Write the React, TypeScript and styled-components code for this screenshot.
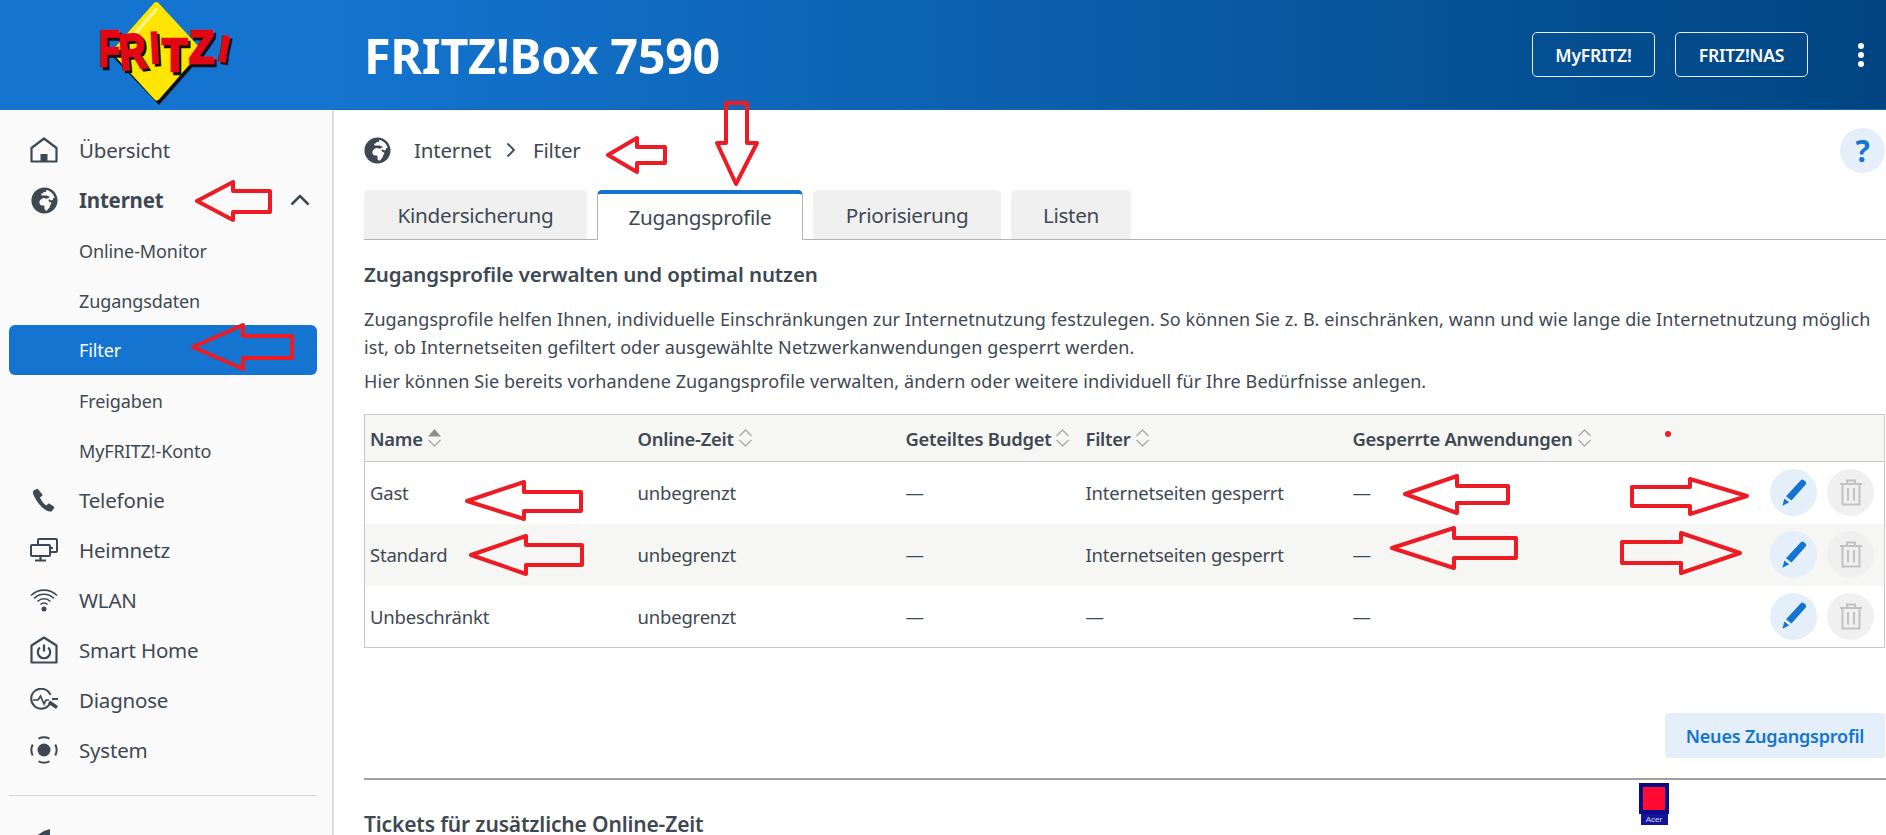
import React from "react";
import styled, { createGlobalStyle } from "styled-components";
import { FaGlobeAfrica } from "react-icons/fa";

const Global = createGlobalStyle`
  html, body {
    margin: 0;
    height: 835px;
    overflow: hidden;
    background: #fff;
  }
  body {
    font-family: "Noto Sans", "Open Sans", sans-serif;
    font-size: 18px;
    color: #3e4852;
  }
  * { box-sizing: border-box; }
`;

const Page = styled.div`
  position: relative;
  width: 1886px;
  height: 835px;
  overflow: hidden;
  display: grid;
  grid-template-columns: 334px 1fr;
  grid-template-rows: 110px 1fr;
`;

const LogoBar = styled.div`
  background: #1474d0;
  display: flex;
  align-items: flex-start;
  padding-left: 90px;
`;

const Header = styled.header`
  background: linear-gradient(90deg, #1474d0 0%, #004581 100%);
  border-bottom: 1px solid #1a62a8;
  display: flex;
  align-items: center;
  padding: 0 2px 0 30px;
`;

const Product = styled.h1`
  margin: 0 auto 0 0;
  color: #fff;
  font-size: 48.5px;
  font-weight: 700;
  letter-spacing: -0.3px;
`;

const HeaderButton = styled.button<{ $w: number }>`
  height: 45px;
  width: ${(p) => p.$w}px;
  margin-right: 20px;
  background: transparent;
  border: 1px solid #e5eef6;
  border-radius: 5px;
  color: #fff;
  font: 600 17.5px "Noto Sans", sans-serif;
  letter-spacing: -0.2px;
`;

const Dots = styled.div`
  display: flex;
  flex-direction: column;
  gap: 3px;
  margin: 0 21px 0 30px;
  span {
    width: 6px;
    height: 6px;
    border-radius: 50%;
    background: #fff;
  }
`;

const Sidebar = styled.nav`
  background: #fafafa;
  border-right: 2px solid #dcdcdc;
  padding: 15px 15px 0 9px;
  position: relative;
  &::after {
    content: "";
    position: absolute;
    left: 0;
    right: 0;
    bottom: 0;
    height: 5px;
    background: linear-gradient(180deg, rgba(250, 250, 250, 0.6), #e2e2e2);
  }
`;

const NavItem = styled.div<{ $bold?: boolean }>`
  height: 50px;
  display: flex;
  align-items: center;
  padding-left: 21px;
  border-radius: 6px;
  font-size: 20.5px;
  letter-spacing: -0.2px;
  font-weight: ${(p) => (p.$bold ? 700 : 400)};
  svg { flex: none; }
`;

const NavIcon = styled.span`
  width: 28px;
  height: 28px;
  margin-right: 21px;
  display: flex;
  align-items: center;
  justify-content: center;
  color: #3e4852;
`;

const Chevron = styled.svg`
  margin-left: auto;
  margin-right: 7px;
`;

const SubItem = styled.div<{ $active?: boolean }>`
  height: 50px;
  display: flex;
  align-items: center;
  padding-left: 70px;
  padding-top: ${(p) => (p.$active ? "0" : "1px")};
  border-radius: 6px;
  font-size: 18px;
  letter-spacing: -0.1px;
  background: ${(p) => (p.$active ? "#1474d0" : "transparent")};
  color: ${(p) => (p.$active ? "#fff" : "#3e4852")};
`;

const SideDivider = styled.div`
  border-top: 1px solid #d4d4d4;
  margin-top: 20px;
  margin-bottom: 21px;
`;

const Main = styled.main`
  padding: 0 2px 0 30px;
`;

const Crumbs = styled.div`
  height: 80px;
  display: flex;
  align-items: center;
  font-size: 20.5px;
  letter-spacing: -0.2px;
`;

const CrumbGlobe = styled(FaGlobeAfrica)`
  margin-right: 23px;
`;

const CrumbSep = styled.svg`
  margin: 0 17px 0 15px;
`;

const HelpButton = styled.div`
  margin-left: auto;
  width: 45px;
  height: 45px;
  border-radius: 50%;
  background: #e4eff9;
  color: #1474d0;
  font-size: 30px;
  font-weight: 700;
  display: flex;
  align-items: center;
  justify-content: center;
`;

const Tabs = styled.div`
  display: flex;
  gap: 10px;
  height: 50px;
  margin-right: -2px;
  border-bottom: 1px solid #b4b4b4;
`;

const Tab = styled.div<{ $w: number; $active?: boolean }>`
  width: ${(p) => p.$w}px;
  height: ${(p) => (p.$active ? "50px" : "49px")};
  display: flex;
  align-items: center;
  justify-content: center;
  font-size: 20.7px;
  letter-spacing: -0.3px;
  border-radius: 5px 5px 0 0;
  background: ${(p) => (p.$active ? "#fff" : "#f0f0f0")};
  border: ${(p) => (p.$active ? "1px solid #b4b4b4" : "none")};
  border-top: ${(p) => (p.$active ? "4px solid #1474d0" : "none")};
  border-bottom: none;
`;

const Heading = styled.h2`
  margin: 18px 0 0;
  font-size: 20.5px;
  line-height: 32px;
  font-weight: 600;
  letter-spacing: -0.1px;
`;

const Para = styled.p`
  margin: 15px 0 0;
  font-size: 18px;
  line-height: 28px;
  letter-spacing: 0.1px;
  & + & { margin-top: 6px; }
`;

const Table = styled.table`
  margin-top: 19px;
  width: 1520px;
  table-layout: fixed;
  border-collapse: collapse;
  border: 1px solid #c8c8c8;
  th {
    height: 47px;
    background: #f6f6f4;
    border-bottom: 1px solid #c8c8c8;
    text-align: left;
    padding: 0 6px;
    font-size: 18.4px;
    font-weight: 600;
    letter-spacing: -0.25px;
  }
  td {
    height: 62px;
    padding: 0 6px;
    font-size: 18.5px;
    letter-spacing: -0.2px;
  }
  th:first-child, td:first-child { padding-left: 5px; }
  tbody tr:nth-child(2) td { background: #f6f6f4; }
`;

const HeadInner = styled.span`
  display: inline-flex;
  align-items: center;
  gap: 4px;
  white-space: nowrap;
`;

const Actions = styled.div`
  display: flex;
  justify-content: flex-end;
  gap: 10px;
  padding-right: 4px;
`;

const DashCell = styled.span`
  margin-right: auto;
  align-self: center;
`;

const RoundButton = styled.div<{ $off?: boolean }>`
  width: 47px;
  height: 47px;
  border-radius: 50%;
  background: ${(p) => (p.$off ? "#f0f0f0" : "#e4eff9")};
  display: flex;
  align-items: center;
  justify-content: center;
`;

const FormActions = styled.div`
  display: flex;
  justify-content: flex-end;
  margin-top: 65px;
`;

const PrimaryButton = styled.div`
  width: 220px;
  height: 45px;
  border-radius: 4px;
  background: #e4eff9;
  color: #1474d0;
  font-size: 18px;
  font-weight: 600;
  letter-spacing: -0.2px;
  display: flex;
  align-items: center;
  justify-content: center;
`;

const Rule = styled.div`
  margin-top: 20px;
  margin-right: -2px;
  border-top: 2px solid #a0a0a0;
`;

const SubHeading = styled.h2`
  margin: 30px 0 0;
  font-size: 21px;
  font-weight: 600;
  letter-spacing: -0.15px;
`;

const Overlay = styled.svg`
  position: absolute;
  left: 0;
  top: 0;
  pointer-events: none;
`;

const Sticker = styled.div`
  position: absolute;
  left: 1639px;
  top: 783px;
  width: 30px;
  display: flex;
  flex-direction: column;
  align-items: center;
`;

const StickerBox = styled.div`
  width: 30px;
  height: 31px;
  background: #ff0a30;
  border: 4px solid #0a0a86;
`;

const StickerTag = styled.div`
  width: 27px;
  height: 11px;
  background: #14149a;
  color: #d8d8f0;
  font: 8px/11px "Liberation Sans", sans-serif;
  text-align: center;
`;

const HomeIcon = () => (
  <svg width="28" height="26" viewBox="0 0 28 26" fill="none" stroke="currentColor" strokeWidth="2.2" strokeLinejoin="round">
    <path d="M1.5 11 14 1.5 26.5 11v13.5h-25z" />
    <path d="M10.5 25v-8h7v8z" fill="currentColor" stroke="none" />
  </svg>
);

const PhoneIcon = () => (
  <svg width="24" height="24" viewBox="0 0 24 24" fill="currentColor">
    <path d="M4.6 1 1.7 2.6C.6 3.6.8 5.600 2 8c2.700 6 6.800 11 12.400 14.500 2.500 1.500 4.900 1.500 6-.1l1.700-2.300c.4-.6.3-1.300-.3-1.700l-4.200-2.700c-.6-.3-1.200-.2-1.700.3l-1.500 1.600c-2.900-1.800-5.200-4.700-6.500-8.300l1.900-1.100c.6-.4.8-1 .6-1.600L6.300 1.500C6 .9 5.200.7 4.600 1z" />
  </svg>
);

const NetworkIcon = () => (
  <svg width="28" height="24" viewBox="0 0 28 24" fill="none" stroke="currentColor" strokeWidth="2">
    <path d="M8 6V2a1 1 0 0 1 1-1h17a1 1 0 0 1 1 1v11a1 1 0 0 1-1 1h-6" />
    <rect x="1" y="7" width="19" height="11" rx="1" />
    <path d="M10.500 18v4M5 22.500h11" strokeWidth="2.200" />
    <path d="M20 10h3" />
  </svg>
);

const WifiIcon = () => (
  <svg width="28" height="24" viewBox="0 0 28 24" fill="none" stroke="currentColor" strokeWidth="1.600">
    <path d="M1 7.500C8 .3 20 .3 27 7.500" />
    <path d="M4 10.500c5.500-5.600 14.500-5.600 20 0" />
    <path d="M7.500 13.500c3.700-3.600 9.300-3.600 13 0" />
    <path d="M10.500 16.500c2-1.800 5-1.800 7 0" />
    <circle cx="14" cy="21" r="2.500" fill="currentColor" stroke="none" />
  </svg>
);

const SmartHomeIcon = () => (
  <svg width="28" height="28" viewBox="0 0 28 28" fill="none" stroke="currentColor" strokeWidth="2.200" strokeLinejoin="round">
    <path d="M1.500 9.500 14 1.500l12.500 8v17h-25z" />
    <path d="M9.800 11.500a6.200 6.200 0 1 0 8.400 0" />
    <path d="M14 8.500v7" />
  </svg>
);

const DiagnoseIcon = () => (
  <svg width="28" height="24" viewBox="0 0 28 24" fill="none" stroke="currentColor" strokeWidth="2">
    <path d="M20 15.500A10 10 0 1 1 20.500 7" />
    <path d="M3 12h5l2.500-4 3.500 8 2-4h3" strokeWidth="1.700" />
    <path d="M19 14l8 5.500" strokeWidth="3.400" />
    <path d="M22 11h6" />
  </svg>
);

const SystemIcon = () => (
  <svg width="28" height="28" viewBox="0 0 28 28" fill="none" stroke="currentColor" strokeWidth="2">
    <circle cx="14" cy="14" r="6.500" fill="currentColor" stroke="none" />
    <path d="M8.500 2.700a12.500 12.500 0 0 1 11 0" />
    <path d="M25.300 8.500a12.500 12.500 0 0 1 0 11" />
    <path d="M19.500 25.300a12.500 12.500 0 0 1-11 0" />
    <path d="M2.700 19.500a12.500 12.500 0 0 1 0-11" />
  </svg>
);

const WizardIcon = () => (
  <svg width="28" height="28" viewBox="0 0 28 28" fill="currentColor">
    <path d="M14 3l6-2v20h-6l-8 5V8z" />
  </svg>
);

const PencilIcon = () => (
  <svg width="26" height="28" viewBox="0 0 26 28" fill="#1474d0">
    <path d="M19.800 1.200c.8-.8 2-.8 2.900-.1l1.700 1.400c1 .8 1.100 2.100.3 3L10.500 21.500 5 17.200z" />
    <path d="M3.300 19.500 8.200 23.300 1.500 26.800z" />
  </svg>
);

const TrashIcon = () => (
  <svg width="24" height="27" viewBox="0 0 24 27" fill="none" stroke="#c2c2c2" strokeWidth="2">
    <path d="M1 5h22M8 5V1.500h8V5" />
    <path d="M3.500 5v20.500h17V5" />
    <path d="M9 9v12.500M15 9v12.500" />
  </svg>
);

const SortIcon = ({ sorted }: { sorted?: boolean }) => (
  <svg width="15" height="20" viewBox="0 0 15 20" fill="none" stroke="#a9a9a9" strokeWidth="1.300">
    {sorted ? <path d="M7.500 1 14 8.500H1z" fill="#8e8e8e" stroke="none" /> : <path d="M1.500 8 7.500 2l6 6" />}
    <path d="M1.500 12 7.500 18l6-6" />
  </svg>
);

const ArrowLine = ({ points }: { points: string }) => (
  <polygon points={points} fill="none" stroke="#ed1c24" strokeWidth="4" strokeLinejoin="round" />
);

const navTop = [
  { label: "Telefonie", icon: <PhoneIcon /> },
  { label: "Heimnetz", icon: <NetworkIcon /> },
  { label: "WLAN", icon: <WifiIcon /> },
  { label: "Smart Home", icon: <SmartHomeIcon /> },
  { label: "Diagnose", icon: <DiagnoseIcon /> },
  { label: "System", icon: <SystemIcon /> },
];

const subItems = ["Online-Monitor", "Zugangsdaten", "Filter", "Freigaben", "MyFRITZ!-Konto"];

const columns = [
  { label: "Name", width: 267, sorted: true },
  { label: "Online-Zeit", width: 268 },
  { label: "Geteiltes Budget", width: 180 },
  { label: "Filter", width: 267 },
  { label: "Gesperrte Anwendungen", width: 538 },
];

const rows = [
  ["Gast", "unbegrenzt", "—", "Internetseiten gesperrt", "—"],
  ["Standard", "unbegrenzt", "—", "Internetseiten gesperrt", "—"],
  ["Unbeschränkt", "unbegrenzt", "—", "—", "—"],
];

const arrows = [
  "197,201 233,182 233,191 270,191 270,212 233,212 233,220",
  "193,347 243,325 243,336 292,336 292,358 243,358 243,369",
  "608,155 637,138 637,147 665,147 665,163 637,163 637,172",
  "726,103 747,103 747,143 757,143 736,184 717,143 726,143",
  "467,501 524,482 524,492 581,492 581,511 524,511 524,519",
  "471,555 526,536 526,545 582,545 582,565 526,565 526,574",
  "1405,494 1457,476 1457,486 1508,486 1508,503 1457,503 1457,513",
  "1392,548 1454,528 1454,538 1516,538 1516,558 1454,558 1454,568",
  "1632,487 1690,487 1690,479 1747,496 1690,514 1690,506 1632,506",
  "1622,542 1681,542 1681,533 1740,553 1681,573 1681,563 1622,563",
];

// letters of the logo: x, baseline, horizontal squeeze, size, tilt
const logoLetters = [
  { c: "F", x: 9, y: 66, sx: 0.68, size: 50, r: 0 },
  { c: "R", x: 31, y: 70, sx: 0.74, size: 50, r: -6 },
  { c: "I", x: 61, y: 63, sx: 0.72, size: 44, r: -3 },
  { c: "T", x: 72, y: 71, sx: 0.9, size: 46, r: 0 },
  { c: "Z", x: 99, y: 63, sx: 0.9, size: 46, r: 0 },
  { c: "!", x: 126, y: 60, sx: 1, size: 36, r: 10 },
];

const LogoLetter = ({ l, dx, fill }: { l: (typeof logoLetters)[number]; dx: number; fill: string }) => (
  <text
    transform={`translate(${l.x + dx} ${l.y + dx}) rotate(${l.r}) scale(${l.sx} 1)`}
    fontSize={l.size}
    fill={fill}
    stroke={fill}
    strokeWidth="2.400"
  >
    {l.c}
  </text>
);

const FritzLogo = () => (
  <svg width="145" height="110" viewBox="0 0 145 110">
    <path d="M68 6 114 54 69 105 22 56z" fill="#111" />
    <path d="M64 3c1.500-1.500 3-1.500 4.500 0L110 48c1.500 1.500 1.500 3 0 4.500L69 99.500c-1.500 1.500-3 1.500-4.500 0L23 54c-1.500-1.500-1.500-3 0-4.500z" fill="#ffe600" />
    <path d="M31 47 64 9c1-1 3-1 4 0l-2 3L35 48z" fill="#fff388" />
    <g fontFamily="Liberation Sans, sans-serif" fontWeight="700">
      {logoLetters.map((l) => (
        <LogoLetter key={`s${l.c}`} l={l} dx={2.500} fill="#111" />
      ))}
      {logoLetters.map((l) => (
        <LogoLetter key={l.c} l={l} dx={0} fill="#e30613" />
      ))}
    </g>
  </svg>
);

export default function App() {
  return (
    <Page>
      <Global />
      <LogoBar>
        <FritzLogo />
      </LogoBar>
      <Header>
        <Product>FRITZ!Box 7590</Product>
        <HeaderButton $w={123}>MyFRITZ!</HeaderButton>
        <HeaderButton $w={133}>FRITZ!NAS</HeaderButton>
        <Dots>
          <span />
          <span />
          <span />
        </Dots>
      </Header>
      <Sidebar>
        <NavItem>
          <NavIcon>
            <HomeIcon />
          </NavIcon>
          Übersicht
        </NavItem>
        <NavItem $bold>
          <NavIcon>
            <FaGlobeAfrica size={27} />
          </NavIcon>
          Internet
          <Chevron width="20" height="12" viewBox="0 0 20 12" fill="none" stroke="#3e4852" strokeWidth="2.500">
            <path d="M1.500 10.500 10 2l8.500 8.500" />
          </Chevron>
        </NavItem>
        {subItems.map((s) => (
          <SubItem key={s} $active={s === "Filter"}>
            {s}
          </SubItem>
        ))}
        {navTop.map((n) => (
          <NavItem key={n.label}>
            <NavIcon>{n.icon}</NavIcon>
            {n.label}
          </NavItem>
        ))}
        <SideDivider />
        <NavItem>
          <NavIcon>
            <WizardIcon />
          </NavIcon>
          Assistenten
        </NavItem>
      </Sidebar>
      <Main>
        <Crumbs>
          <CrumbGlobe size={27} />
          Internet
          <CrumbSep width="10" height="16" viewBox="0 0 10 16" fill="none" stroke="#3e4852" strokeWidth="1.800">
            <path d="M1.500 1.500 8 8l-6.500 6.500" />
          </CrumbSep>
          Filter
          <HelpButton>?</HelpButton>
        </Crumbs>
        <Tabs>
          <Tab $w={223}>Kindersicherung</Tab>
          <Tab $w={206} $active>
            Zugangsprofile
          </Tab>
          <Tab $w={188}>Priorisierung</Tab>
          <Tab $w={120}>Listen</Tab>
        </Tabs>
        <Heading>Zugangsprofile verwalten und optimal nutzen</Heading>
        <Para>
          Zugangsprofile helfen Ihnen, individuelle Einschränkungen zur Internetnutzung festzulegen. So können Sie z. B. einschränken, wann und wie lange die Internetnutzung möglich
          <br />
          ist, ob Internetseiten gefiltert oder ausgewählte Netzwerkanwendungen gesperrt werden.
        </Para>
        <Para>Hier können Sie bereits vorhandene Zugangsprofile verwalten, ändern oder weitere individuell für Ihre Bedürfnisse anlegen.</Para>
        <Table>
          <colgroup>
            {columns.map((c) => (
              <col key={c.label} width={c.width} />
            ))}
          </colgroup>
          <thead>
            <tr>
              {columns.map((c) => (
                <th key={c.label}>
                  <HeadInner>
                    {c.label}
                    <SortIcon sorted={c.sorted} />
                  </HeadInner>
                </th>
              ))}
            </tr>
          </thead>
          <tbody>
            {rows.map((r) => (
              <tr key={r[0]}>
                {r.slice(0, 4).map((v, i) => (
                  <td key={i}>{v}</td>
                ))}
                <td>
                  <Actions>
                    <DashCell>{r[4]}</DashCell>
                    <RoundButton>
                      <PencilIcon />
                    </RoundButton>
                    <RoundButton $off>
                      <TrashIcon />
                    </RoundButton>
                  </Actions>
                </td>
              </tr>
            ))}
          </tbody>
        </Table>
        <FormActions>
          <PrimaryButton>Neues Zugangsprofil</PrimaryButton>
        </FormActions>
        <Rule />
        <SubHeading>Tickets für zusätzliche Online-Zeit</SubHeading>
      </Main>
      <Overlay width="1886" height="835" viewBox="0 0 1886 835">
        {arrows.map((a) => (
          <ArrowLine key={a} points={a} />
        ))}
        <circle cx="1668" cy="434" r="3" fill="#ed1c24" />
      </Overlay>
      <Sticker>
        <StickerBox />
        <StickerTag>Acer</StickerTag>
      </Sticker>
    </Page>
  );
}
